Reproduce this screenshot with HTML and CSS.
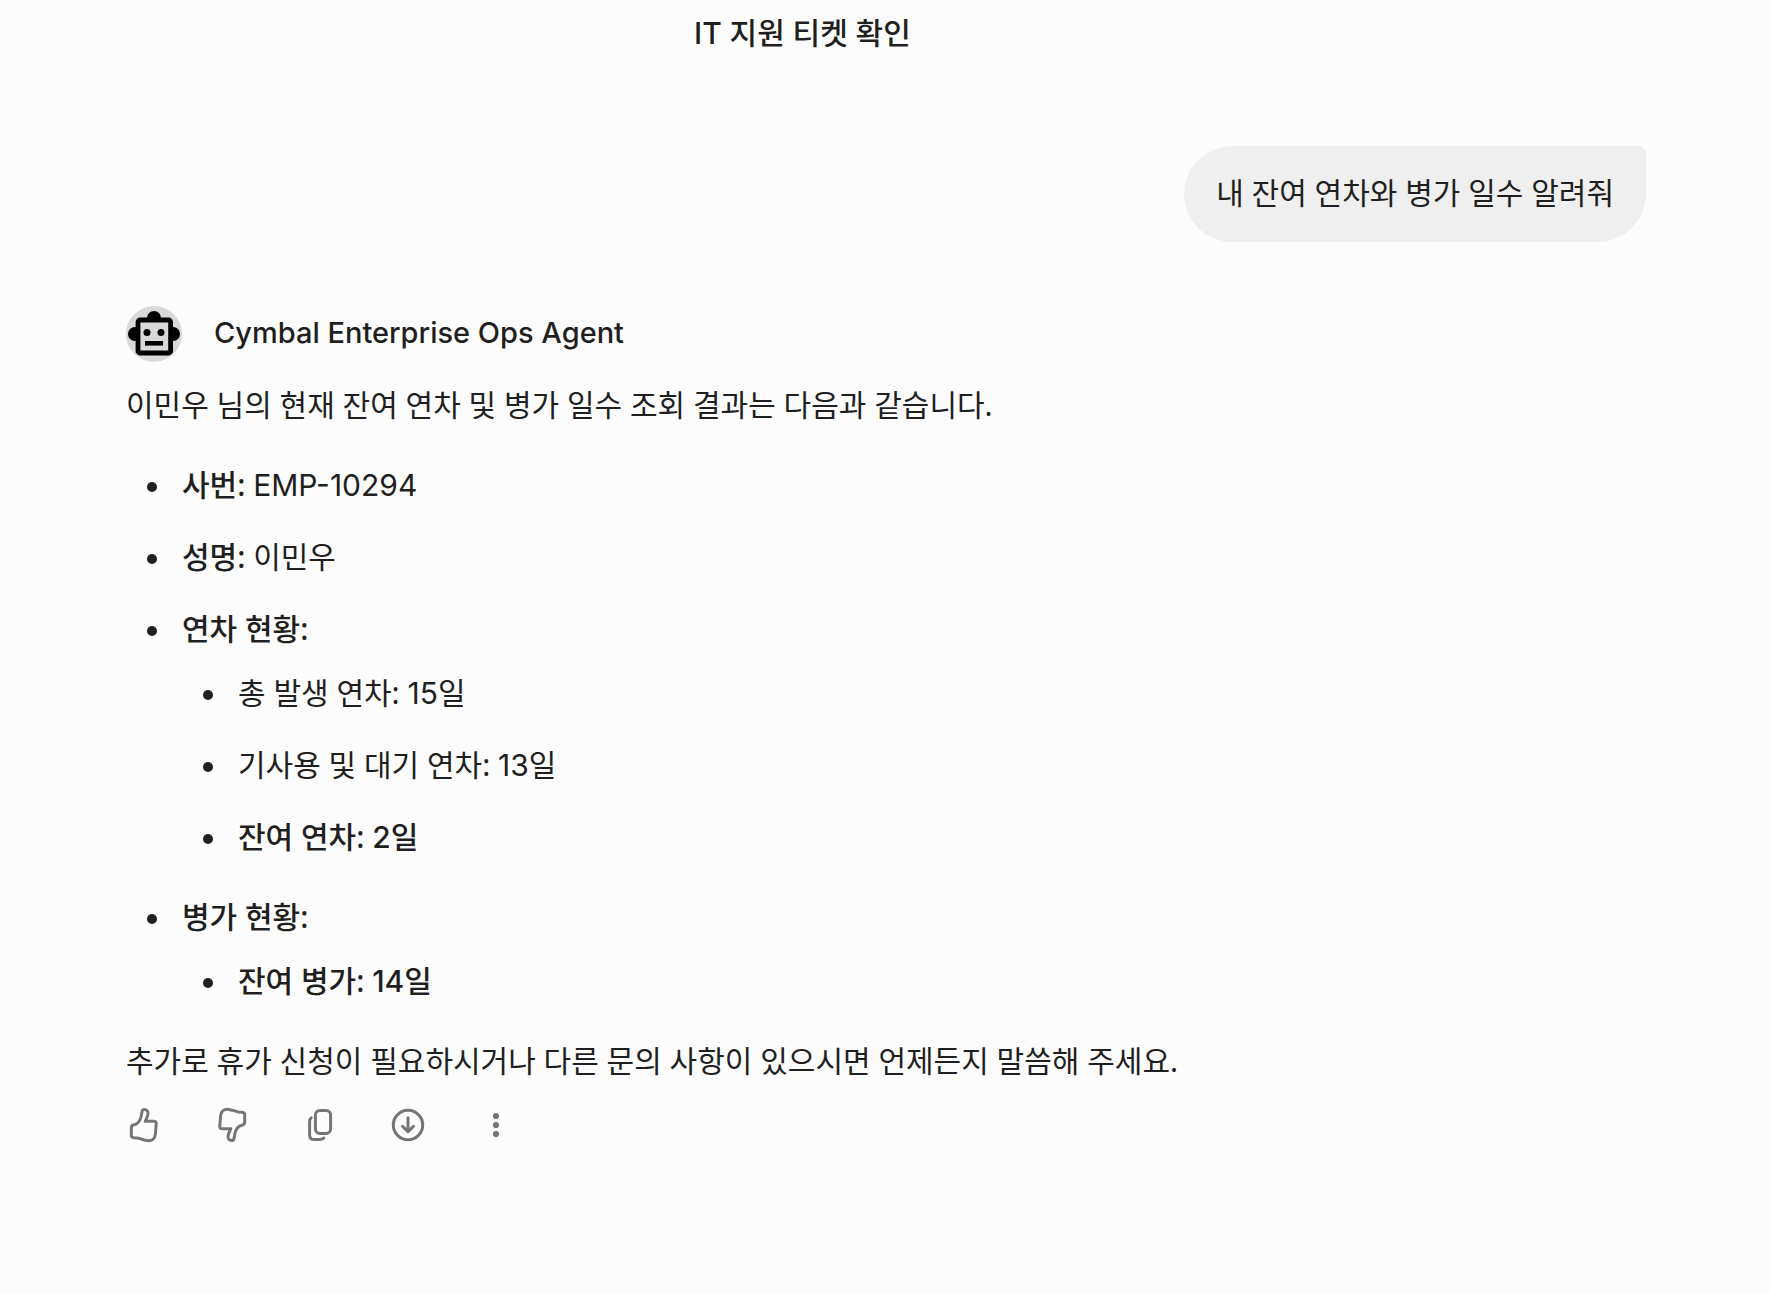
FILE: index.html
```html
<!DOCTYPE html>
<html lang="ko">
<head>
  <meta charset="utf-8">
  <meta name="viewport" content="width=device-width, initial-scale=1">
  <title>Cymbal Enterprise Ops Agent</title>
  <link rel="stylesheet" href="styles.css">
</head>
<body>
  <main class="chat">
    <button class="suggestion" type="button"><span class="latin">IT</span> 지원 티켓 확인</button>

    <p class="bubble">내 잔여 연차와 병가 일수 알려줘</p>

    <article class="reply">
      <header class="agent">
        <svg class="avatar" viewBox="0 0 56 56" aria-hidden="true">
          <circle cx="28" cy="28" r="28" fill="#d9d9d9"/>
          <circle cx="9" cy="28" r="7"/>
          <circle cx="47" cy="28" r="7"/>
          <circle cx="28" cy="12" r="7"/>
          <rect x="12" y="14" width="32.6" height="33" rx="2" fill="#d9d9d9" stroke="#000" stroke-width="4.8"/>
          <circle cx="21" cy="26.5" r="3.5"/>
          <circle cx="35" cy="26.5" r="3.5"/>
          <rect x="19" y="35" width="18" height="4.6"/>
        </svg>
        <h2 class="agent-name">Cymbal Enterprise Ops Agent</h2>
      </header>

      <p class="text">이민우 님의 현재 잔여 연차 및 병가 일수 조회 결과는 다음과 같습니다.</p>

      <ul class="list">
        <li><strong>사번:</strong> <span class="latin">EMP-10294</span></li>
        <li><strong>성명:</strong> 이민우</li>
        <li><strong>연차 현황:</strong>
          <ul class="list nested">
            <li>총 발생 연차: <span class="latin">15</span>일</li>
            <li>기사용 및 대기 연차: <span class="latin">13</span>일</li>
            <li><strong>잔여 연차: <span class="latin">2</span>일</strong></li>
          </ul>
        </li>
        <li><strong>병가 현황:</strong>
          <ul class="list nested">
            <li><strong>잔여 병가: <span class="latin">14</span>일</strong></li>
          </ul>
        </li>
      </ul>

      <p class="text">추가로 휴가 신청이 필요하시거나 다른 문의 사항이 있으시면 언제든지 말씀해 주세요.</p>

      <div class="actions">
        <button class="action" type="button" aria-label="좋아요">
          <svg viewBox="0 0 36 36"><path d="M18.3 2.4C20.8 2.4 22.5 4.5 21.9 7.4C21.3 10.2 20.3 11.8 19.2 14.3H27.8Q30.6 14.3 30.2 17L29.4 27C29 32 26 34 21.2 33.6C17.8 33.2 14.8 31.5 11.6 31.1L7.8 30.8Q5.3 30.5 5.3 28V21Q5.3 18.3 8 17.8C12.2 17 14.2 13.4 15.1 9.5L15.9 5Q16.3 2.4 18.3 2.4Z"/></svg>
        </button>
        <button class="action" type="button" aria-label="싫어요">
          <svg viewBox="0 0 36 36"><path transform="rotate(180 18 18)" d="M18.3 2.4C20.8 2.4 22.5 4.5 21.9 7.4C21.3 10.2 20.3 11.8 19.2 14.3H27.8Q30.6 14.3 30.2 17L29.4 27C29 32 26 34 21.2 33.6C17.8 33.2 14.8 31.5 11.6 31.1L7.8 30.8Q5.3 30.5 5.3 28V21Q5.3 18.3 8 17.8C12.2 17 14.2 13.4 15.1 9.5L15.9 5Q16.3 2.4 18.3 2.4Z"/></svg>
        </button>
        <button class="action" type="button" aria-label="복사">
          <svg viewBox="0 0 36 36"><rect x="13.4" y="3.4" width="15.2" height="23" rx="4.5"/><path d="M9.2 10.8Q7.6 12.2 7.6 14.5V28Q7.6 32.6 12.2 32.6H17.5Q20.4 32.6 21.8 31"/></svg>
        </button>
        <button class="action" type="button" aria-label="다운로드">
          <svg viewBox="0 0 36 36"><circle cx="18" cy="18" r="14.7"/><path d="M18 10.8V24.4M12.6 19.4L18 24.6L23.4 19.4"/></svg>
        </button>
        <button class="action" type="button" aria-label="더보기">
          <svg class="dots" viewBox="0 0 36 36"><circle cx="18" cy="9" r="3.1"/><circle cx="18" cy="18" r="3.1"/><circle cx="18" cy="27" r="3.1"/></svg>
        </button>
      </div>
    </article>
  </main>
</body>
</html>
```
FILE: styles.css
```css
* {
  box-sizing: border-box;
}

body {
  margin: 0;
  background: #fcfcfc;
  color: #1f1f1f;
  font-family: "Noto Sans", "Noto Sans CJK KR", sans-serif;
  font-size: 30px;
  line-height: 48px;
}

p,
h2,
ul {
  margin: 0;
  padding: 0;
}

button {
  padding: 0;
  border: 0;
  background: none;
  color: inherit;
  font: inherit;
  cursor: pointer;
}

.latin {
  font-family: Inter, sans-serif;
}

.chat {
  display: flex;
  flex-direction: column;
  padding: 9px 124px 120px 126px;
}

.suggestion {
  width: 384px;
  align-self: center;
  font-weight: 500;
  text-align: left;
}

.bubble {
  align-self: flex-end;
  margin-top: 89px;
  padding: 23px 32px 25px;
  border-radius: 48px 8px 48px 48px;
  background: #efefef;
}

.reply {
  margin-top: 64px;
}

.agent {
  display: flex;
  align-items: center;
  gap: 32px;
  margin-bottom: 19px;
}

.avatar {
  width: 56px;
  height: 56px;
}

.agent-name {
  padding-bottom: 2px;
  font-family: Inter, sans-serif;
  font-size: 29px;
  font-weight: 500;
}

.list {
  display: flex;
  flex-direction: column;
  gap: 24px;
  margin: 32px 0;
  padding-left: 56px;
  list-style: none;
}

.nested {
  margin: 16px 0 8px;
}

.list > li:last-child > .nested {
  margin-bottom: 0;
}

.list li::before {
  content: "";
  display: inline-block;
  width: 10px;
  height: 10px;
  margin: 0 25px 4px -35px;
  border-radius: 50%;
  background: #1f1f1f;
}

strong {
  font-weight: 500;
}

.actions {
  display: flex;
  gap: 52px;
  margin-top: 22px;
}

.action,
.action svg {
  display: block;
  width: 36px;
  height: 36px;
}

.action svg {
  fill: none;
  stroke: #757575;
  stroke-width: 3;
  stroke-linecap: round;
  stroke-linejoin: round;
}

.action .dots {
  fill: #757575;
  stroke: none;
}
```
